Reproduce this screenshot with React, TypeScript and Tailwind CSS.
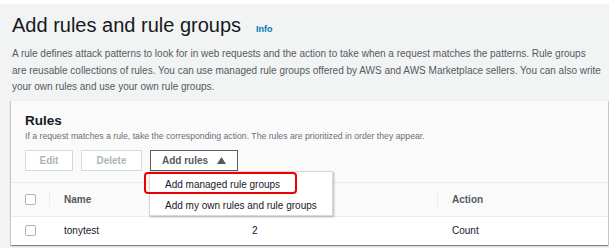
import React from "react";

const font = { fontFamily: '"Liberation Sans", Arial, sans-serif' };

function Checkbox() {
  return <span className="block w-[11px] h-[11px] rounded-[2px] border border-[#aab7b8] bg-white" />;
}

function Divider() {
  return <span className="block w-px h-[15px] bg-[#eaeded]" />;
}

export default function App() {
  return (
    <div className="w-[609px] h-[248px] bg-[#f2f3f3] overflow-hidden text-[#16191f]" style={font}>
      <div className="h-[4px] bg-white" />
      <div className="pl-[11px] pr-[1px]">
        <div className="pt-[9px] flex items-baseline">
          <h1 className="text-[20px] leading-[24px] font-normal text-[#16191f] pl-[1px]">Add rules and rule groups</h1>
          <a className="ml-[15px] text-[9px] font-bold text-[#0073bb]">Info</a>
        </div>
        <p className="mt-[9px] pl-[1px] text-[10px] leading-[16.5px] text-[#545b64] whitespace-nowrap">
          A rule defines attack patterns to look for in web requests and the action to take when a request matches the patterns. Rule groups
          <br />
          are reusable collections of rules. You can use managed rule groups offered by AWS and AWS Marketplace sellers. You can also write
          <br />
          your own rules and use your own rule groups.
        </p>

        <div className="mt-[4px] bg-[#fafafa] border-t border-[#eaeded] shadow-[0_1px_1px_0_rgba(0,28,36,0.3),1px_1px_1px_0_rgba(0,28,36,0.15),-1px_1px_1px_0_rgba(0,28,36,0.15)]">
          <div className="pt-[12px] pl-[14px]">
            <div className="text-[13.5px] leading-[16px] font-bold text-[#16191f]">Rules</div>
            <div className="mt-[1px] text-[8.7px] leading-[12px] text-[#687078] whitespace-nowrap">
              If a request matches a rule, take the corresponding action. The rules are prioritized in order they appear.
            </div>
            <div className="mt-[8px] mb-[11px] flex gap-[8px]">
              <button className="w-[48px] h-[21px] border border-[#d5dbdb] bg-white text-[10px] font-bold text-[#aab7b8]">Edit</button>
              <button className="w-[61px] h-[21px] border border-[#d5dbdb] bg-white text-[10px] font-bold text-[#aab7b8]">Delete</button>
              <div className="relative">
                <button className="w-[88px] h-[21px] border border-[#545b64] bg-white text-[10px] font-bold text-[#545b64] flex items-center justify-center gap-[9px]">
                  <span>Add rules</span>
                  <svg width="9" height="7" viewBox="0 0 9 7"><polygon points="4.5,0 9,7 0,7" fill="#545b64" /></svg>
                </button>
                <div className="absolute left-[-1px] top-[21px] w-[184px] h-[45px] bg-white border border-[#d5dbdb] shadow-[1px_1px_2px_rgba(0,28,36,0.3)] z-10 pt-[2px]">
                  <div className="h-[21px] pl-[15px] flex items-center text-[10px] text-[#16191f] whitespace-nowrap">Add managed rule groups</div>
                  <div className="h-[21px] pl-[15px] flex items-center text-[10px] text-[#16191f] whitespace-nowrap">Add my own rules and rule groups</div>
                </div>
                <div className="absolute left-[-6px] top-[22px] w-[153px] h-[22px] border-2 border-[#ee0000] rounded-[4px] z-20" />
              </div>
            </div>
          </div>
          <div className="h-[35px] border-t border-b border-[#eaeded] flex items-center text-[10px] font-bold text-[#545b64]">
            <div className="w-[38px] pl-[14px] flex items-center"><Checkbox /></div>
            <div className="w-[188px] flex items-center"><Divider /><span className="pl-[14px]">Name</span></div>
            <div className="w-[200px] flex items-center"><Divider /></div>
            <div className="flex-1 flex items-center"><Divider /><span className="pl-[14px]">Action</span></div>
          </div>
          <div className="h-[28px] bg-white flex items-center text-[10px] text-[#16191f]">
            <div className="w-[38px] pl-[14px] flex items-center"><Checkbox /></div>
            <div className="w-[188px] pl-[15px]">tonytest</div>
            <div className="w-[200px] pl-[15px]">2</div>
            <div className="flex-1 pl-[15px]">Count</div>
          </div>
        </div>
      </div>
    </div>
  );
}
